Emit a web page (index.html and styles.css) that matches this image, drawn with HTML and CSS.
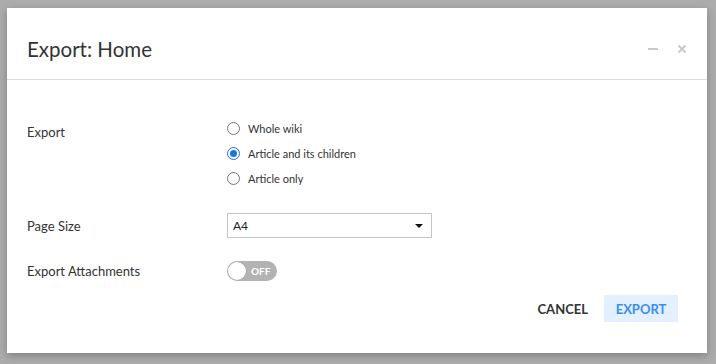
FILE: index.html
```html
<!DOCTYPE html>
<html>
<head>
<meta charset="utf-8">
<link rel="stylesheet" href="styles.css">
</head>
<body>
<div class="dialog">
  <div class="header">
    <div class="title">Export: Home</div>
    <div class="controls">
      <span class="minimize"></span>
      <svg class="close" width="10" height="10" viewBox="0 0 10 10"><path d="M1.5 1.5 L8.5 8.5 M8.5 1.5 L1.5 8.5" stroke="#c8c8c8" stroke-width="2"/></svg>
    </div>
  </div>
  <div class="content">
    <div class="row row-export">
      <div class="label">Export</div>
      <div class="radios">
        <div class="radio"><span class="circle"></span><span>Whole wiki</span></div>
        <div class="radio"><span class="circle checked"></span><span>Article and its children</span></div>
        <div class="radio"><span class="circle"></span><span>Article only</span></div>
      </div>
    </div>
    <div class="row row-size">
      <div class="label">Page Size</div>
      <div class="select"><span>A4</span><span class="caret"></span></div>
    </div>
    <div class="row row-attach">
      <div class="label">Export Attachments</div>
      <div class="toggle"><span class="knob"></span><span class="off">OFF</span></div>
    </div>
  </div>
  <div class="footer">
    <button class="btn cancel">CANCEL</button>
    <button class="btn export">EXPORT</button>
  </div>
</div>
</body>
</html>
```
FILE: styles.css
```css
html, body { margin: 0; padding: 0; }
body {
  background: #acacac;
  width: 716px;
  height: 364px;
  box-sizing: border-box;
  padding: 8px 9px 0 7px;
  font-family: "Lato", "Open Sans", sans-serif;
  color: #333;
}
.dialog {
  background: #fff;
  height: 345px;
  box-shadow: 0 3px 8px rgba(0,0,0,0.25);
  display: flex;
  flex-direction: column;
}
.header {
  height: 72px;
  box-sizing: border-box;
  border-bottom: 1px solid #dcdcdc;
  display: flex;
  align-items: center;
  padding: 10px 20px 0 20px;
}
.title {
  font-size: 20.5px;
  flex: 1;
  color: #333;
}
.controls { display: flex; align-items: center; gap: 19px; }
.minimize { width: 10px; height: 2px; background: #c8c8c8; display: block; }
.close { display: block; }
.content {
  padding: 0 20px;
  display: flex;
  flex-direction: column;
}
.row { display: flex; align-items: center; }
.label { width: 200px; font-size: 13px; color: #333; }
.row-export { align-items: flex-start; padding-top: 40px; }
.row-export .label { padding-top: 4px; }
.radios { display: flex; flex-direction: column; gap: 9px; font-size: 11px; }
.radio { display: flex; align-items: center; height: 16px; }
.circle {
  width: 11px; height: 11px; border: 1px solid #767676; border-radius: 50%;
  margin-right: 8px; box-sizing: content-box; position: relative;
}
.circle.checked { border-color: #1a73e8; }
.circle.checked::after {
  content: ""; position: absolute; left: 2px; top: 2px; width: 7px; height: 7px;
  border-radius: 50%; background: #1a73e8;
}
.row-size { margin-top: 27px; }
.select {
  width: 205px; height: 25px; box-sizing: border-box; border: 1px solid #c4c4c4;
  display: flex; align-items: center; justify-content: space-between;
  padding: 0 8px 0 5px; font-size: 12px; color: #222;
}
.caret {
  width: 0; height: 0; border-left: 4px solid transparent; border-right: 4px solid transparent;
  border-top: 4px solid #111;
}
.row-attach { margin-top: 23px; }
.toggle {
  width: 50px; height: 20px; border-radius: 10px; background: #b3b3b3;
  display: flex; align-items: center; position: relative;
}
.knob {
  width: 18px; height: 18px; border-radius: 50%; background: #fff; margin-left: 1px;
  box-shadow: 0 0 1px rgba(0,0,0,0.3);
}
.off { color: #fff; font-size: 10px; font-weight: bold; margin-left: 5px; }
.footer {
  display: flex; justify-content: flex-end; align-items: center; gap: 16px;
  padding: 14px 29px 0 0;
}
.btn {
  border: none; background: transparent; font-family: inherit; font-size: 13px;
  font-weight: bold; height: 27px; padding: 0 11px; cursor: pointer;
}
.cancel { color: #333; padding: 0; }
.export { color: #3b8ef0; background: #e3f0fe; width: 74px; }
```
